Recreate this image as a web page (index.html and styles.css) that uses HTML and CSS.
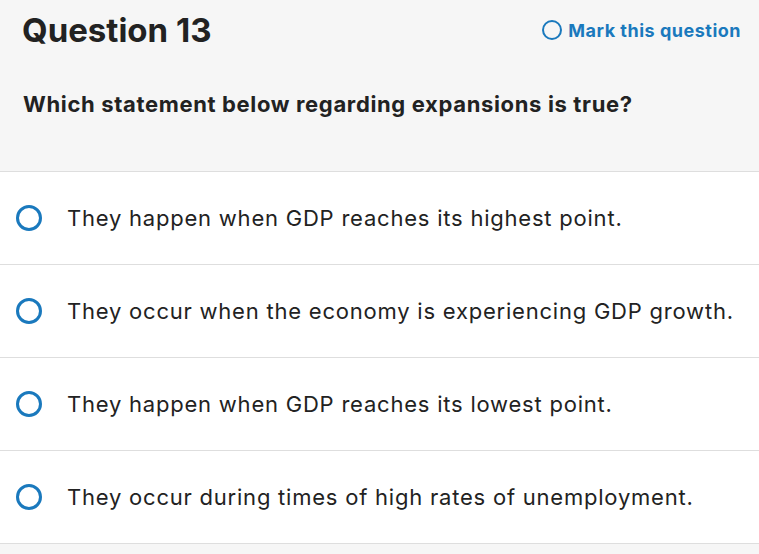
FILE: index.html
```html
<!DOCTYPE html>
<html>
<head>
<meta charset="utf-8">
<link rel="stylesheet" href="styles.css">
</head>
<body>
<div class="page">
  <header class="head">
    <div class="top">
      <h1 class="title">Question 13</h1>
      <a class="mark"><span class="ring small"></span>Mark this question</a>
    </div>
    <p class="prompt">Which statement below regarding expansions is true?</p>
  </header>
  <ul class="options">
    <li class="option"><span class="ring"></span><span class="label">They happen when GDP reaches its highest point.</span></li>
    <li class="option"><span class="ring"></span><span class="label">They occur when the economy is experiencing GDP growth.</span></li>
    <li class="option"><span class="ring"></span><span class="label">They happen when GDP reaches its lowest point.</span></li>
    <li class="option"><span class="ring"></span><span class="label">They occur during times of high rates of unemployment.</span></li>
  </ul>
</div>
</body>
</html>
```
FILE: styles.css
```css
html, body { margin: 0; padding: 0; }
body {
  background: #f6f6f6;
  font-family: "Inter", "Open Sans", sans-serif;
  color: #222;
  width: 759px;
  height: 554px;
  overflow: hidden;
}
.head {
  background: #f6f6f6;
  height: 171px;
  border-bottom: 1px solid #dedede;
  box-sizing: content-box;
}
.top {
  display: flex;
  align-items: center;
  justify-content: space-between;
  padding: 10px 18px 0 22px;
  height: 40px;
}
.title {
  margin: 0;
  font-size: 33px;
  font-weight: 700;
  color: #222;
}
.mark {
  display: flex;
  align-items: center;
  gap: 6px;
  color: #1a79bd;
  font-weight: 700;
  font-size: 18px;
  letter-spacing: 0.5px;
}
.prompt {
  margin: 41px 0 0 23px;
  font-size: 22px;
  font-weight: 700;
  letter-spacing: 0.65px;
  color: #222;
}
.options {
  list-style: none;
  margin: 0;
  padding: 0;
  background: #fff;
}
.option {
  display: flex;
  align-items: center;
  height: 92px;
  border-bottom: 1px solid #dedede;
  padding-left: 16px;
}
.ring {
  width: 20px;
  height: 20px;
  border: 3px solid #1a79bd;
  border-radius: 50%;
  flex: none;
}
.ring.small {
  width: 16px;
  height: 16px;
  border-width: 2.5px;
}
.label {
  margin-left: 25px;
  font-size: 22px;
  letter-spacing: 0.78px;
  color: #222;
}
```
